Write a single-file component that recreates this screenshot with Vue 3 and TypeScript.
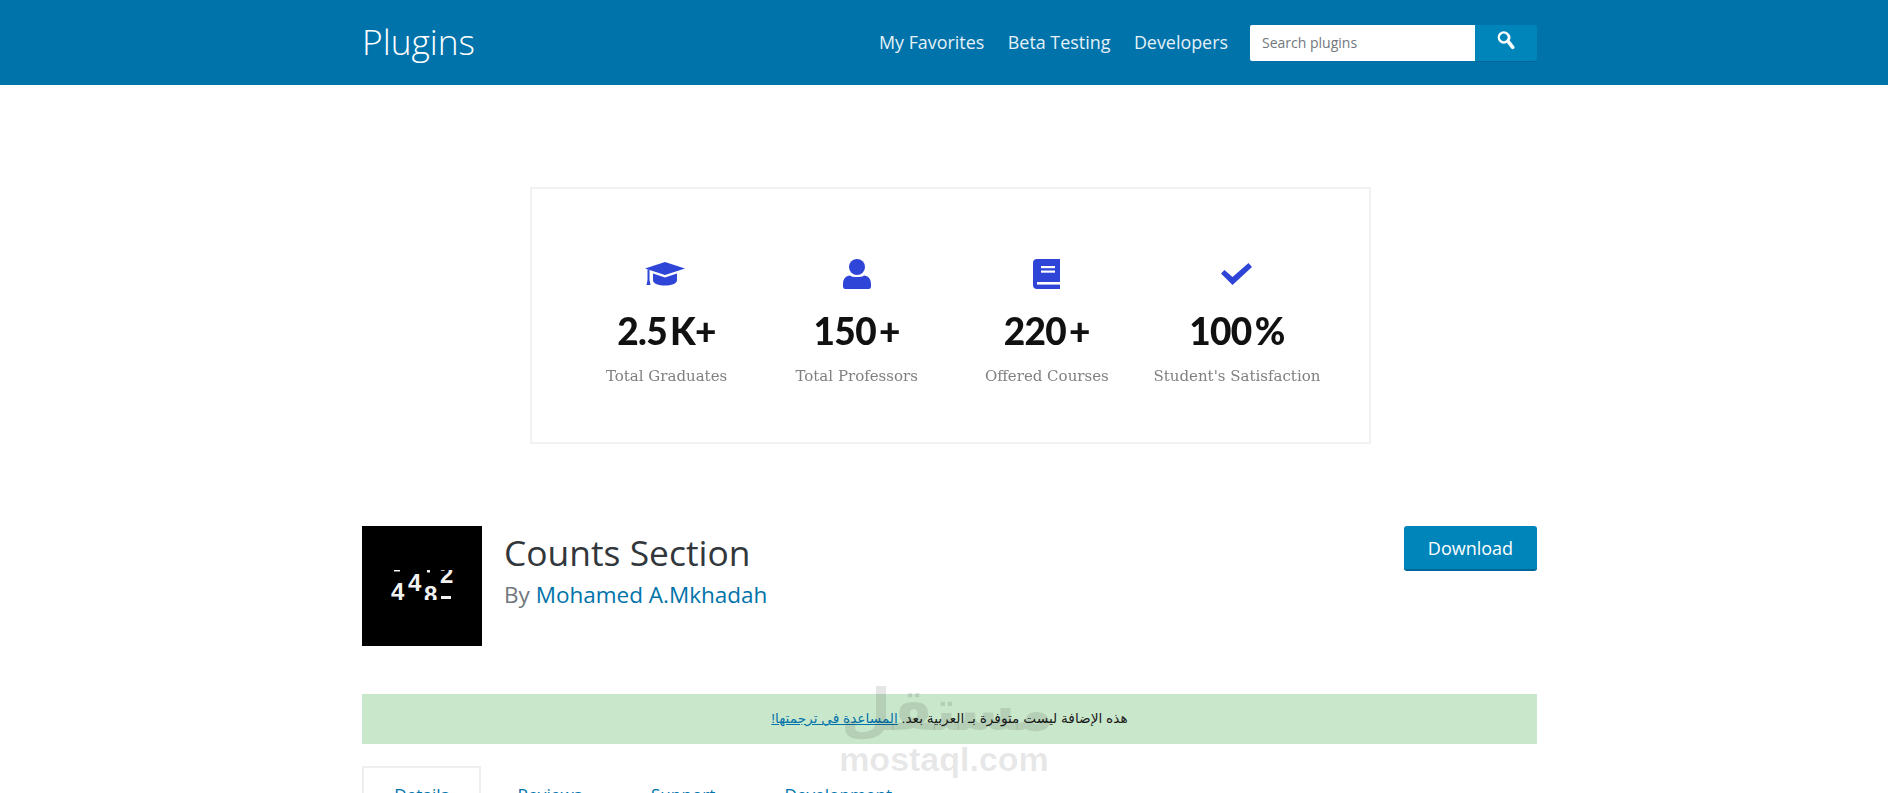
<script setup lang="ts">
const navLinks = ["My Favorites", "Beta Testing", "Developers"];
const stats = [
  { icon: "cap", value: "2.5 K+", label: "Total Graduates" },
  { icon: "person", value: "150 +", label: "Total Professors" },
  { icon: "book", value: "220 +", label: "Offered Courses" },
  { icon: "check", value: "100 %", label: "Student's Satisfaction" },
];
const tabs = ["Details", "Reviews", "Support", "Development"];
</script>

<template>
  <div class="page">
    <header class="topbar">
      <div class="wrap topbar-inner">
        <a class="brand">Plugins</a>
        <nav class="nav">
          <a v-for="link in navLinks" :key="link">{{ link }}</a>
        </nav>
        <form class="search" @submit.prevent>
          <input type="text" placeholder="Search plugins" />
          <button type="submit" aria-label="Search">
            <svg viewBox="0 0 20 20" width="25" height="25">
              <path
                fill="#fff"
                d="M12.14 4.78a5 5 0 0 0-7 0 5 5 0 0 0 0 7 5 5 0 0 0 6 .8l3.5 4.6c.5.7 1.3.8 2 .3s.8-1.3.3-2l-3.6-4.6a5 5 0 0 0-1.2-6.1zM10.7 10.4a3 3 0 0 1-4.2 0 3 3 0 0 1 0-4.2 3 3 0 0 1 4.2 0 3 3 0 0 1 0 4.2z"
              />
            </svg>
          </button>
        </form>
      </div>
    </header>

    <section class="hero">
      <div class="stats">
        <div v-for="stat in stats" :key="stat.label" class="stat">
          <div class="stat-icon">
            <svg v-if="stat.icon === 'cap'" class="cap" viewBox="0 0 40 24" width="40" height="24">
              <path d="M20 0 40 6.5 20 13 0 6.5Z" />
              <path d="M8 11.5 20 15.5 32 11.5V18C32 22 26 23.5 20 23.5S8 22 8 18Z" />
              <path d="M2.5 7.5H4.5V18L5.5 23H1.5L2.5 18Z" />
            </svg>
            <svg v-else-if="stat.icon === 'person'" viewBox="0 0 30 30" width="30" height="30">
              <circle cx="15" cy="8" r="8" />
              <path d="M8 16.5C10 18.5 20 18.5 22 16.5 26 16.5 29 20 29 25V27.5C29 29 28 30 27 30H3C2 30 1 29 1 27.5V25C1 20 4 16.5 8 16.5Z" />
            </svg>
            <svg v-else-if="stat.icon === 'book'" viewBox="0 0 27 30" width="27" height="30">
              <path d="M4 0H27V30H4C1.5 30 0 28.5 0 26V4C0 1.5 1.5 0 4 0Z" />
              <rect class="cut" x="8" y="7" width="14" height="2.2" />
              <rect class="cut" x="8" y="11.5" width="14" height="2.2" />
              <rect class="cut" x="4" y="23" width="23" height="2.6" />
            </svg>
            <svg v-else viewBox="0 0 31 22" width="31" height="22">
              <path d="M0 10.5 3.5 7 11.5 14 27.5 0 31 4 11.5 22Z" />
            </svg>
          </div>
          <div class="stat-value">{{ stat.value }}</div>
          <div class="stat-label">{{ stat.label }}</div>
        </div>
      </div>
    </section>

    <main class="wrap">
      <div class="plugin-head">
        <svg class="thumb" viewBox="0 0 120 120" width="120" height="120">
          <defs>
            <clipPath id="digits">
              <rect x="0" y="44" width="120" height="30" />
            </clipPath>
          </defs>
          <rect width="120" height="120" fill="#000" />
          <g clip-path="url(#digits)" fill="#f2f2f2" font-family="'Liberation Sans', sans-serif" font-weight="700" font-size="24">
            <text x="29" y="73.5">4</text>
            <text x="46" y="65">4</text>
            <text x="62" y="76.5">8</text>
            <text x="78" y="57">2</text>
            <rect x="32" y="44" width="6" height="1.5" />
            <rect x="65" y="44" width="3" height="2.5" />
            <rect x="79" y="70" width="10" height="3" />
          </g>
        </svg>
        <div class="plugin-title">
          <h1>Counts Section</h1>
          <p>By <a>Mohamed A.Mkhadah</a></p>
        </div>
        <a class="download">Download</a>
      </div>

      <div class="notice" dir="rtl">
        هذه الإضافة ليست متوفرة بـ العربية بعد. <a>المساعدة في ترجمتها!</a>
      </div>

      <ul class="tabs">
        <li v-for="(tab, i) in tabs" :key="tab" :class="{ active: i === 0 }">{{ tab }}</li>
      </ul>
    </main>

    <div class="watermark">
      <span class="mark-ar">مستقل</span>
      <span class="mark-en">mostaql.com</span>
    </div>
  </div>
</template>

<style>
html,
body {
  margin: 0;
  background: #fff;
  overflow: hidden;
}
</style>

<style scoped>
.page {
  position: relative;
  height: 793px;
  overflow: hidden;
  font-family: "Open Sans", "Noto Sans", sans-serif;
  color: #32373c;
}

.wrap {
  width: 1175px;
  margin-left: 362px;
}

.topbar {
  height: 85px;
  background: #0073aa;
}

.topbar-inner {
  display: flex;
  align-items: center;
  height: 100%;
}

.brand {
  margin-top: -4px;
  font-size: 35.3px;
  font-weight: 300;
  color: #fff;
}

.nav {
  display: flex;
  gap: 23.5px;
  margin-top: -2px;
  margin-left: auto;
  font-size: 17.9px;
  color: #e5f1f7;
}

.search {
  display: flex;
  height: 36px;
  margin-left: 22px;
}

.search input {
  box-sizing: border-box;
  width: 225px;
  height: 36px;
  padding: 0 12px;
  border: none;
  border-radius: 2px 0 0 2px;
  background: #fff;
  font: 14px "Open Sans", sans-serif;
  outline: none;
}

.search input::placeholder {
  color: #72777c;
  opacity: 1;
}

.search button {
  display: flex;
  align-items: center;
  justify-content: center;
  box-sizing: border-box;
  width: 62px;
  height: 36px;
  padding: 0 2px 6px 0;
  border: none;
  border-radius: 0 2px 2px 0;
  background: #0085ba;
  box-shadow: 0 1px 0 #006799;
}

.hero {
  box-sizing: border-box;
  width: 841px;
  height: 257px;
  margin: 102px 0 82px 530px;
  padding: 0 37px 0 39.5px;
  border: 2px solid #f1f1f1;
}

.stats {
  display: grid;
  grid-template-columns: repeat(4, 1fr);
  padding-top: 70px;
  filter: blur(0.4px);
}

.stat {
  display: flex;
  flex-direction: column;
  align-items: center;
}

.stat-icon {
  display: flex;
  align-items: center;
  height: 30px;
}

.stat-icon svg {
  display: block;
  fill: #2f45d8;
}

.stat-icon svg.cap {
  margin-right: 3px;
}

.stat-icon .cut {
  fill: #fff;
}

.stat-value {
  margin-top: 20px;
  font-family: Lato, sans-serif;
  font-size: 37px;
  font-weight: 900;
  line-height: 44px;
  letter-spacing: -0.7px;
  word-spacing: -5px;
  color: #111;
}

.stat-label {
  margin-top: 13px;
  font-family: "DejaVu Serif", serif;
  font-size: 15px;
  line-height: 20px;
  color: #808080;
}

.plugin-head {
  display: flex;
  align-items: flex-start;
  height: 120px;
}

.thumb {
  display: block;
  flex: none;
}

.plugin-title {
  margin-left: 22px;
}

.plugin-title h1 {
  margin: 2px 0 0;
  font-size: 35.4px;
  font-weight: 400;
  line-height: 48px;
  color: #32373c;
}

.plugin-title p {
  margin: 3px 0 0;
  font-size: 22.5px;
  line-height: 32px;
  color: #72777c;
}

.plugin-title a {
  color: #0073aa;
}

.download {
  box-sizing: border-box;
  width: 133px;
  height: 45px;
  margin-left: auto;
  border-radius: 3px;
  border-bottom: 2px solid #006799;
  background: #0085ba;
  font-size: 18px;
  line-height: 44px;
  text-align: center;
  color: #fff;
}

.notice {
  height: 50px;
  margin-top: 48px;
  background: #c9e7cb;
  font-family: "Liberation Sans", "DejaVu Sans", sans-serif;
  font-size: 13.7px;
  line-height: 50px;
  text-align: center;
  color: #1a1a1a;
}

.notice a {
  color: #0073aa;
  text-decoration: underline;
}

.tabs {
  display: flex;
  gap: 4px;
  margin: 22px 0 0;
  padding: 0;
  list-style: none;
  font-size: 17.2px;
  line-height: 24px;
  color: #0073aa;
}

.tabs li {
  padding: 16.5px 32.5px;
}

.tabs li.active {
  padding: 14.5px 30.2px;
  border: 2px solid #eee;
}

.watermark {
  position: absolute;
  top: 674px;
  left: 838px;
  display: flex;
  flex-direction: column;
  align-items: center;
  width: 212px;
  color: rgba(0, 0, 0, 0.1);
  pointer-events: none;
}

.mark-ar {
  margin-left: 6px;
  margin-bottom: -2px;
  font-family: "DejaVu Sans", sans-serif;
  font-size: 58px;
  font-weight: 700;
  line-height: 72px;
  white-space: nowrap;
}

.mark-en {
  font-family: "Liberation Sans", sans-serif;
  font-size: 34px;
  font-weight: 700;
  line-height: 30px;
}
</style>
